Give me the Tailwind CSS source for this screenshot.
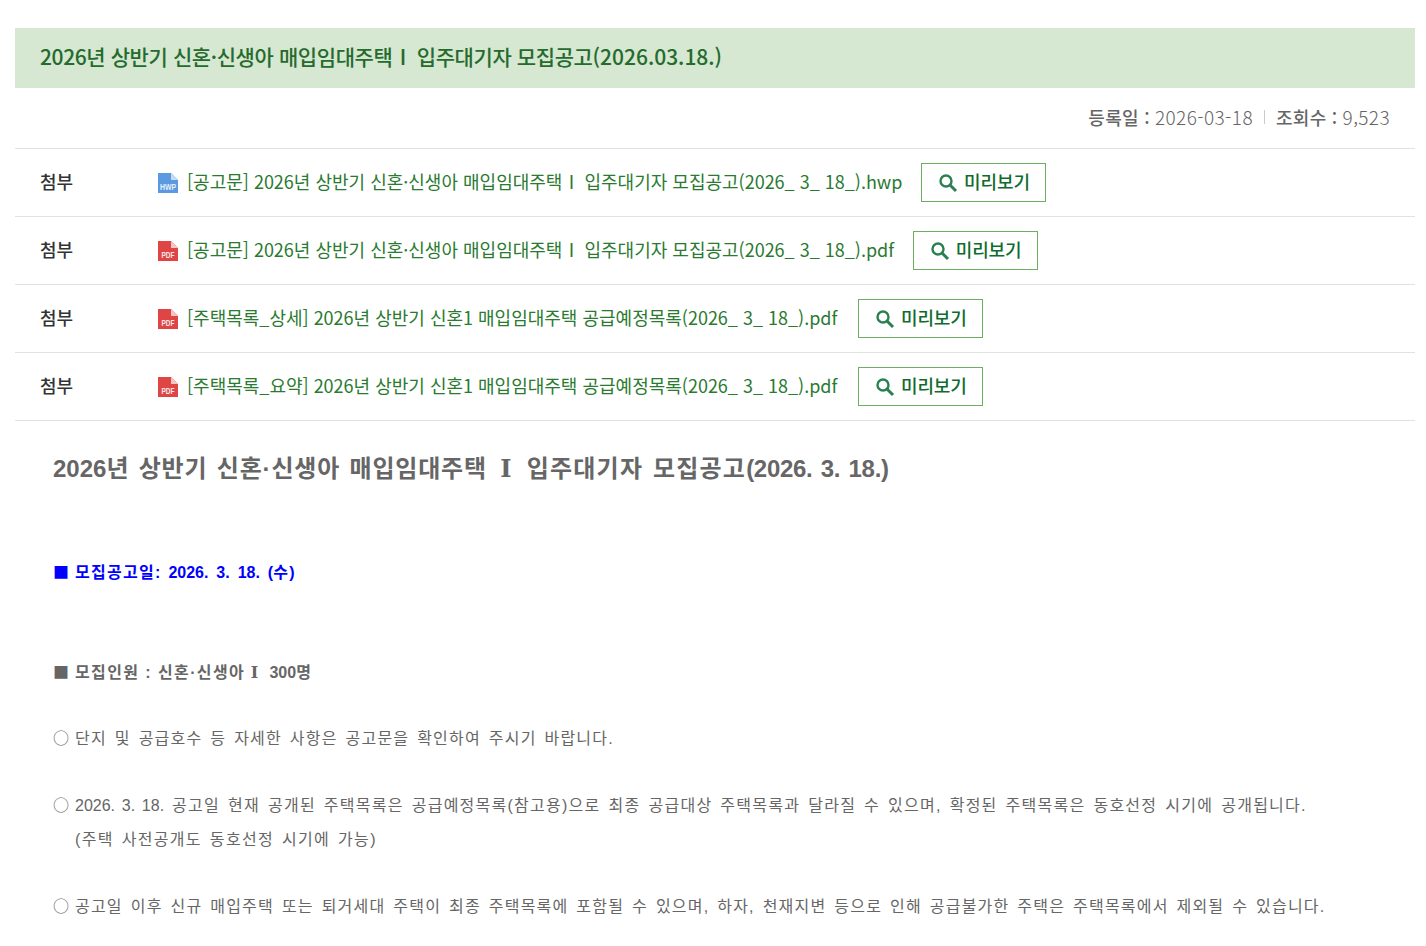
<!DOCTYPE html>
<html lang="ko">
  <head>
    <meta charset="UTF-8" />
    <meta name="viewport" content="width=device-width, initial-scale=1.0" />
    <script src="https://cdn.jsdelivr.net/npm/@tailwindcss/browser@4"></script>
    <title>모집공고</title>
  </head>
  <body class="bg-white font-['Noto_Sans_CJK_KR','Noto_Sans',sans-serif] overflow-hidden h-[946px]">
    <div class="mx-[15px] mt-[28px] w-[1400px]">
      <!-- title -->
      <h1 class="h-[60px] pb-[2px] bg-[#d6e7d2] pl-[25px] flex items-center text-[21px] font-medium tracking-[-0.4px] text-[#246b2c] whitespace-pre"><span>2026년 상반기 신혼·신생아 매입임대주택<span class="tracking-[-9px]"> </span>Ⅰ<span class="tracking-[-4px]">  </span>입주대기자 모집공고<span class="tracking-normal">(2026.03.18.)</span></span></h1>

      <!-- date / views -->
      <div class="h-[61px] pb-[2px] flex items-center justify-end pr-[25px] text-[18px] text-[#666] border-b border-[#e2e2e2]">
        <span class="font-medium tracking-[0.3px]">등록일 :</span>
        <span class="ml-[5px] text-[19px] font-light tracking-[0.4px]">2026-03-18</span>
        <span class="w-px h-[14px] bg-[#ccc] mx-[11px]"></span>
        <span class="font-medium tracking-[0.3px]">조회수 :</span>
        <span class="ml-[5px] text-[19px] font-light tracking-[0.4px]">9,523</span>
      </div>

      <!-- attachments -->
      <div class="h-[68px] flex items-center border-b border-[#e2e2e2]">
        <div class="w-[143px] mb-[2px] pl-[25px] text-[18px] font-medium text-[#333]">첨부</div>
        <svg class="w-5 h-5 mr-[9px] overflow-visible" viewBox="0 0 20 20"><path d="M0 0H13L20 7V20H0Z" fill="#5c9ae0"/><path d="M13 0L20 7H13Z" fill="#c6dcf5"/><text x="10" y="17" font-size="9" font-weight="700" fill="#e8f0fb" text-anchor="middle" textLength="16" lengthAdjust="spacingAndGlyphs" font-family="Liberation Sans">HWP</text></svg>
        <a class="mb-[2px] text-[18px] text-[#2a7a30] whitespace-pre">[공고문] 2026년 상반기 신혼·신생아 매입임대주택<span class="tracking-[-6px]"> </span>Ⅰ<span class="tracking-[-3px]">  </span>입주대기자 모집공고(2026_ 3_ 18_).hwp</a>
        <button class="ml-[19px] w-[125px] h-[39px] border border-[#6ab05f] flex items-center justify-center gap-[6px] text-[18px] font-medium text-[#0f6b2e] tracking-[-0.1px]">
          <svg class="w-[20px] h-[20px]" viewBox="0 0 20 20" fill="none" stroke="#2a8050"><circle cx="8" cy="8" r="5.5" stroke-width="2.4"/><path d="M12 12L18 18" stroke-width="3"/></svg><span class="mb-[2px]">미리보기</span>
        </button>
      </div>
      <div class="h-[68px] flex items-center border-b border-[#e2e2e2]">
        <div class="w-[143px] mb-[2px] pl-[25px] text-[18px] font-medium text-[#333]">첨부</div>
        <svg class="w-5 h-5 mr-[9px] overflow-visible" viewBox="0 0 20 20"><path d="M0 0H13L20 7V20H0Z" fill="#e04545"/><path d="M13 0L20 7H13Z" fill="#f5c6c6"/><text x="10" y="17" font-size="9" font-weight="700" fill="#fbe8e8" text-anchor="middle" textLength="13" lengthAdjust="spacingAndGlyphs" font-family="Liberation Sans">PDF</text></svg>
        <a class="mb-[2px] text-[18px] text-[#2a7a30] whitespace-pre">[공고문] 2026년 상반기 신혼·신생아 매입임대주택<span class="tracking-[-6px]"> </span>Ⅰ<span class="tracking-[-3px]">  </span>입주대기자 모집공고(2026_ 3_ 18_).pdf</a>
        <button class="ml-[19px] w-[125px] h-[39px] border border-[#6ab05f] flex items-center justify-center gap-[6px] text-[18px] font-medium text-[#0f6b2e] tracking-[-0.1px]">
          <svg class="w-[20px] h-[20px]" viewBox="0 0 20 20" fill="none" stroke="#2a8050"><circle cx="8" cy="8" r="5.5" stroke-width="2.4"/><path d="M12 12L18 18" stroke-width="3"/></svg><span class="mb-[2px]">미리보기</span>
        </button>
      </div>
      <div class="h-[68px] flex items-center border-b border-[#e2e2e2]">
        <div class="w-[143px] mb-[2px] pl-[25px] text-[18px] font-medium text-[#333]">첨부</div>
        <svg class="w-5 h-5 mr-[9px] overflow-visible" viewBox="0 0 20 20"><path d="M0 0H13L20 7V20H0Z" fill="#e04545"/><path d="M13 0L20 7H13Z" fill="#f5c6c6"/><text x="10" y="17" font-size="9" font-weight="700" fill="#fbe8e8" text-anchor="middle" textLength="13" lengthAdjust="spacingAndGlyphs" font-family="Liberation Sans">PDF</text></svg>
        <a class="mb-[2px] text-[18px] text-[#2a7a30] whitespace-pre">[주택목록_상세] 2026년 상반기 신혼1 매입임대주택 공급예정목록(2026_ 3_ 18_).pdf</a>
        <button class="ml-[21px] w-[125px] h-[39px] border border-[#6ab05f] flex items-center justify-center gap-[6px] text-[18px] font-medium text-[#0f6b2e] tracking-[-0.1px]">
          <svg class="w-[20px] h-[20px]" viewBox="0 0 20 20" fill="none" stroke="#2a8050"><circle cx="8" cy="8" r="5.5" stroke-width="2.4"/><path d="M12 12L18 18" stroke-width="3"/></svg><span class="mb-[2px]">미리보기</span>
        </button>
      </div>
      <div class="h-[68px] flex items-center border-b border-[#e2e2e2]">
        <div class="w-[143px] mb-[2px] pl-[25px] text-[18px] font-medium text-[#333]">첨부</div>
        <svg class="w-5 h-5 mr-[9px] overflow-visible" viewBox="0 0 20 20"><path d="M0 0H13L20 7V20H0Z" fill="#e04545"/><path d="M13 0L20 7H13Z" fill="#f5c6c6"/><text x="10" y="17" font-size="9" font-weight="700" fill="#fbe8e8" text-anchor="middle" textLength="13" lengthAdjust="spacingAndGlyphs" font-family="Liberation Sans">PDF</text></svg>
        <a class="mb-[2px] text-[18px] text-[#2a7a30] whitespace-pre">[주택목록_요약] 2026년 상반기 신혼1 매입임대주택 공급예정목록(2026_ 3_ 18_).pdf</a>
        <button class="ml-[21px] w-[125px] h-[39px] border border-[#6ab05f] flex items-center justify-center gap-[6px] text-[18px] font-medium text-[#0f6b2e] tracking-[-0.1px]">
          <svg class="w-[20px] h-[20px]" viewBox="0 0 20 20" fill="none" stroke="#2a8050"><circle cx="8" cy="8" r="5.5" stroke-width="2.4"/><path d="M12 12L18 18" stroke-width="3"/></svg><span class="mb-[2px]">미리보기</span>
        </button>
      </div>

      <!-- body -->
      <div class="pl-[38px] text-[#666] font-['Liberation_Sans','Noto_Sans_CJK_KR',sans-serif]">
        <h2 class="mt-[30px] leading-[36px] text-[24px] font-bold whitespace-pre tracking-[0.8px] [word-spacing:2px]"><span class="tracking-normal">2026</span>년 상반기 신혼·신생아 매입임대주택 <span class="font-['DejaVu_Serif'] ml-[4px] mr-[5px]">Ⅰ</span> <span class="tracking-[1.2px]">입주대기자 모집공고</span><span class="tracking-[-0.3px]">(2026. 3. 18.)</span></h2>
        <p class="mt-[67px] h-[34px] leading-[34px] text-[16px] font-bold text-[#0000ff] whitespace-pre tracking-[1.3px]"><span class="inline-block w-[22px] font-['Noto_Sans_CJK_KR'] tracking-normal">■</span>모집공고일<span class="tracking-normal [word-spacing:3.5px]">: 2026. 3. 18. (</span>수<span class="tracking-normal">)</span></p>
        <p class="mt-[66px] h-[34px] leading-[34px] text-[16px] font-bold whitespace-pre tracking-[1.4px]"><span class="inline-block w-[22px] font-['Noto_Sans_CJK_KR'] tracking-normal">■</span>모집인원 : 신혼·신생아<span class="font-['DejaVu_Serif'] tracking-normal"> Ⅰ  </span><span class="tracking-normal">300</span>명</p>
        <p class="mt-[32px] h-[34px] leading-[34px] text-[16px] whitespace-pre tracking-[1.2px] [word-spacing:2.3px]"><span class="inline-block w-[22px] font-['Noto_Sans_CJK_KR'] tracking-normal">○</span>단지 및 공급호수 등 자세한 사항은 공고문을 확인하여 주시기 바랍니다.</p>
        <p class="mt-[33px] leading-[34px] text-[16px] whitespace-pre tracking-[1.25px] [word-spacing:2.3px]"><span class="inline-block w-[22px] font-['Noto_Sans_CJK_KR'] tracking-normal">○</span><span class="tracking-normal">2026. 3. 18.</span> 공고일 현재 공개된 주택목록은 공급예정목록(참고용)으로 최종 공급대상 주택목록과 달라질 수 있으며, 확정된 주택목록은 동호선정 시기에 공개됩니다.</p>
        <p class="pl-[22px] leading-[34px] text-[16px] whitespace-pre tracking-[1.3px] [word-spacing:2.3px]">(주택 사전공개도 동호선정 시기에 가능)</p>
        <p class="mt-[31px] leading-[34px] text-[16px] whitespace-pre tracking-[1.2px] [word-spacing:2.3px]"><span class="inline-block w-[22px] font-['Noto_Sans_CJK_KR'] tracking-normal">○</span>공고일 이후 신규 매입주택 또는 퇴거세대 주택이 최종 주택목록에 포함될 수 있으며, 하자, 천재지변 등으로 인해 공급불가한 주택은 주택목록에서 제외될 수 있습니다.</p>
      </div>
    </div>
  </body>
</html>
